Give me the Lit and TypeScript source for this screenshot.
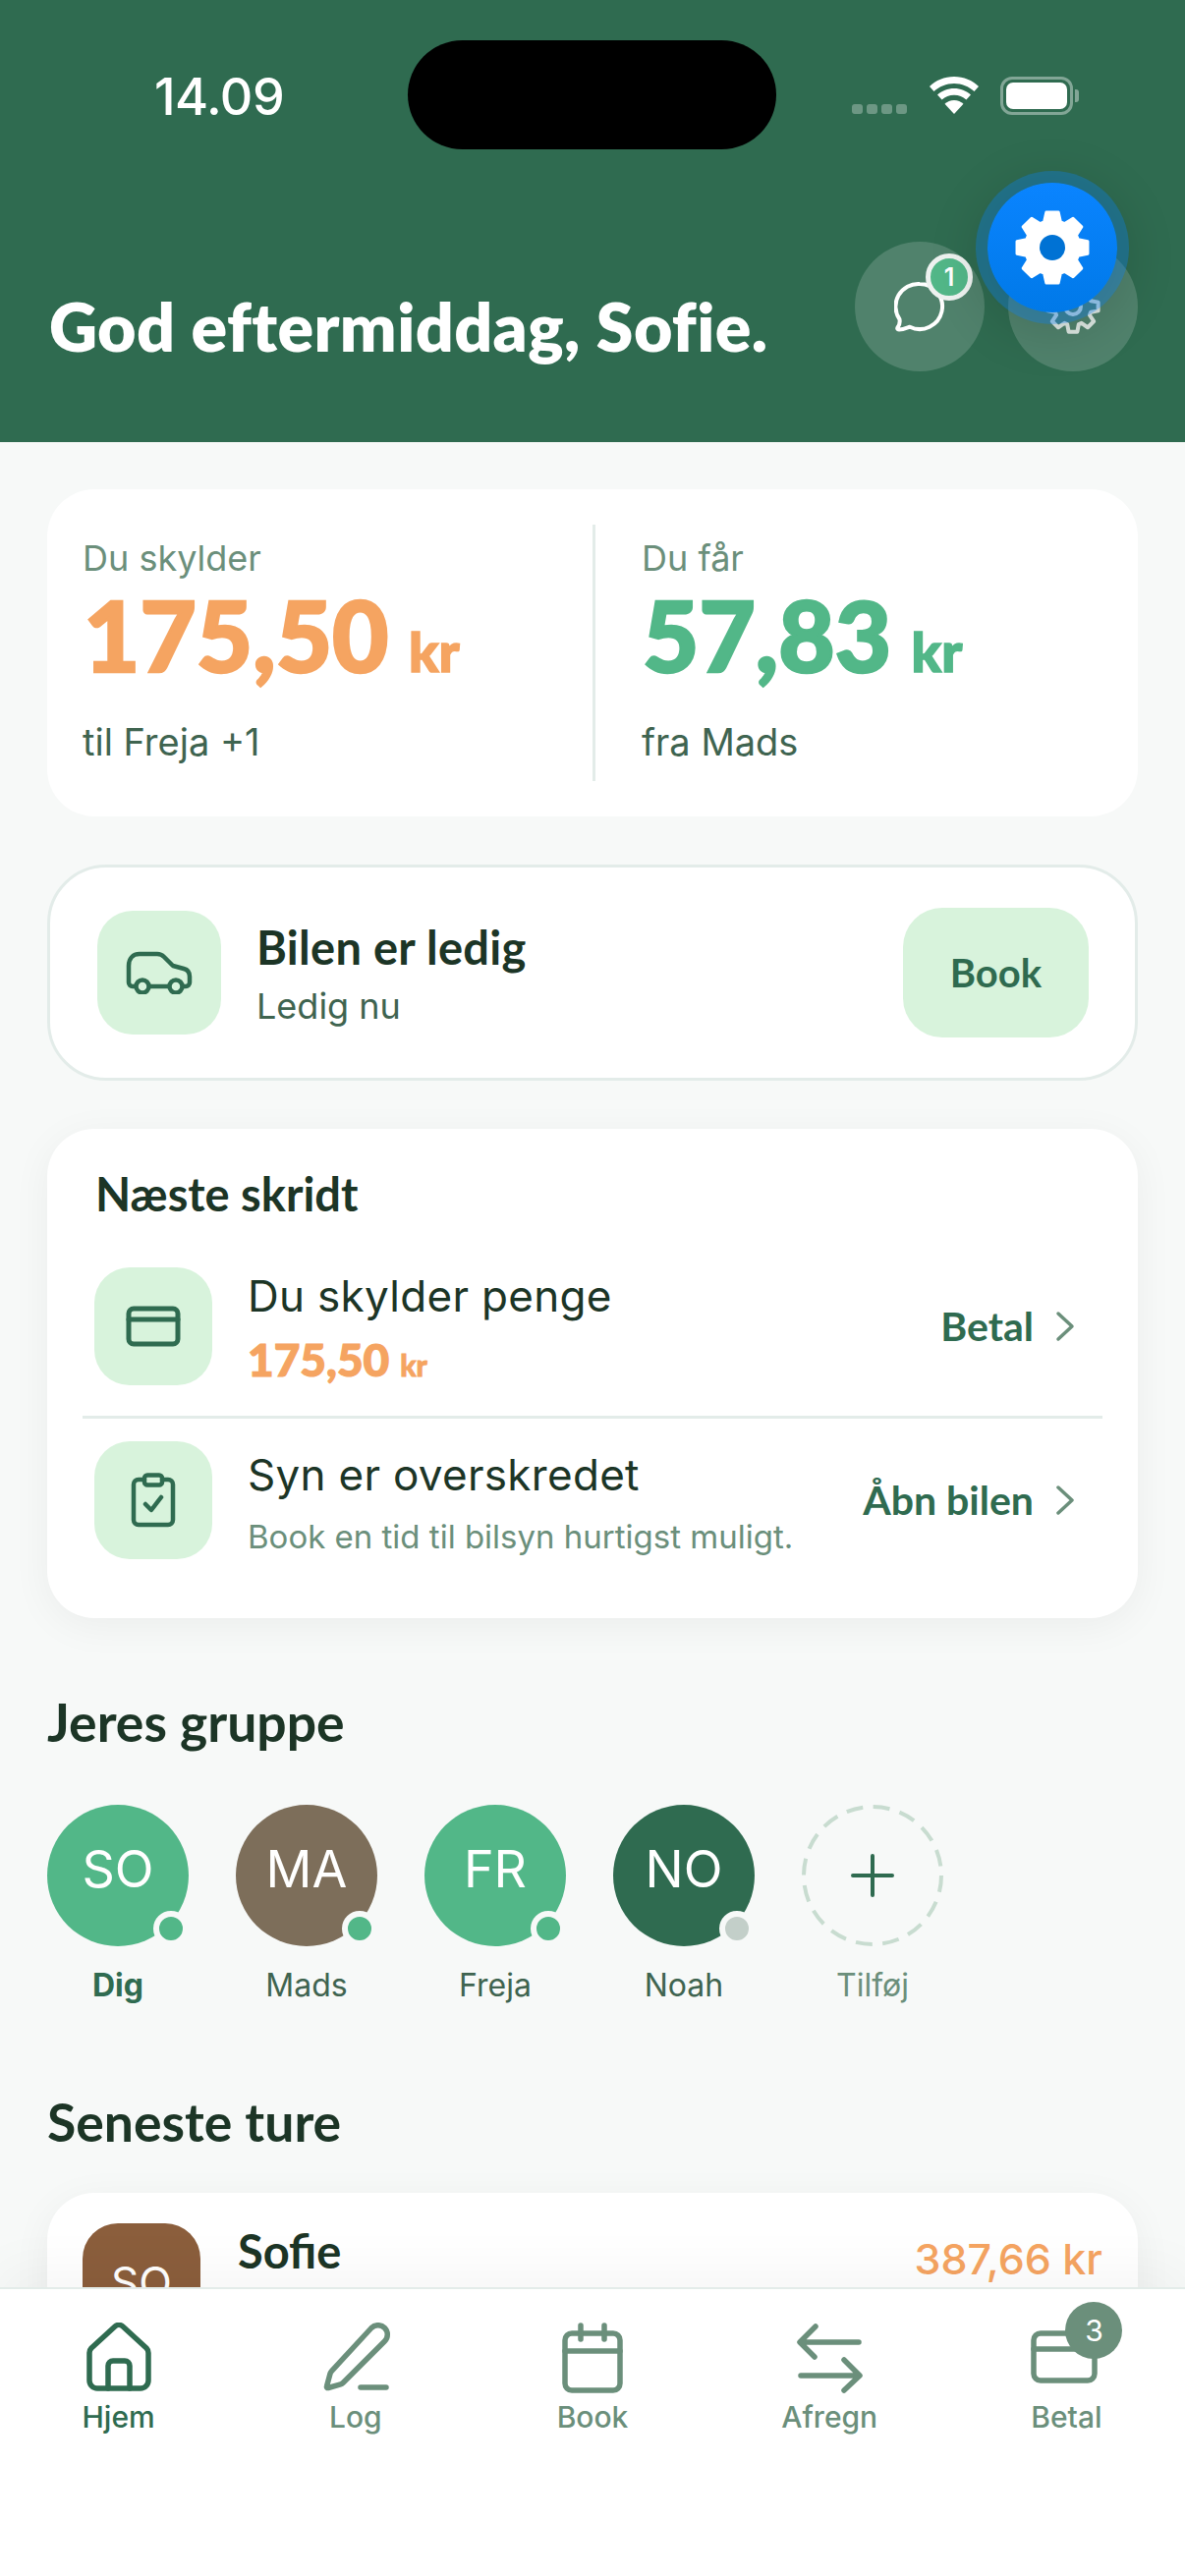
import { LitElement, html, css, svg } from 'lit';
import { customElement } from 'lit/decorators.js';

// 8 tooth gear outline, used for the settings icon and the ghost below it
const gearPath = (cx: number, cy: number, outer: number, root: number) => {
  const pts: string[] = [];
  for (let i = 0; i < 8; i++) {
    const a = (i * Math.PI) / 4 - Math.PI / 2;
    const steps: [number, number][] = [
      [root, -0.31],
      [outer, -0.17],
      [outer, 0.17],
      [root, 0.31],
    ];
    for (const [r, d] of steps) {
      pts.push(`${(cx + r * Math.cos(a + d)).toFixed(2)} ${(cy + r * Math.sin(a + d)).toFixed(2)}`);
    }
  }
  return `M${pts.join('L')}Z`;
};

const members = [
  { initials: 'SO', name: 'Dig', color: '#52b788', online: true, self: true },
  { initials: 'MA', name: 'Mads', color: '#7d6e5a', online: true, self: false },
  { initials: 'FR', name: 'Freja', color: '#52b788', online: true, self: false },
  { initials: 'NO', name: 'Noah', color: '#2f6b50', online: false, self: false },
];

const navIcons = {
  home: svg`<path d="M8 26 32 4a6 6 0 0 1 8 0L64 26a7 7 0 0 1 2 5V59a8 8 0 0 1-8 8H14a8 8 0 0 1-8-8V31a7 7 0 0 1 2-5Z"/><path d="M25 67V44a5 5 0 0 1 5-5H42a5 5 0 0 1 5 5V67"/>`,
  log: svg`<path d="M52 5.500a9.500 9.500 0 0 1 13.500 13.500L23 61.500a5 5 0 0 1-2.300 1.300L8 66.500a1.200 1.200 0 0 1-1.500-1.500L10 52a5 5 0 0 1 1.300-2.300Z"/><path d="M41 66H67"/>`,
  book: svg`<rect x="8" y="11" width="56" height="58" rx="7"/><path d="M8 29H64M24 3V17M48 3V17"/>`,
  swap: svg`<path d="M7 20H66M22 4 6 20 21 35M7 54H66M51 38 67 54 51 69"/>`,
  pay: svg`<rect x="3" y="11" width="62" height="48" rx="7"/><path d="M3 27H65"/>`,
};

const navItems: { label: string; icon: keyof typeof navIcons; active?: boolean; badge?: string }[] = [
  { label: 'Hjem', icon: 'home', active: true },
  { label: 'Log', icon: 'log' },
  { label: 'Book', icon: 'book' },
  { label: 'Afregn', icon: 'swap' },
  { label: 'Betal', icon: 'pay', badge: '3' },
];

@customElement('app-root')
export class AppRoot extends LitElement {
  static styles = css`
    :host {
      display: block;
      position: relative;
      width: 1206px;
      height: 2622px;
      overflow: hidden;
      background: #f7f9f8;
      font-family: Inter, 'Noto Sans', sans-serif;
      color: #1c3526;
    }
    svg {
      display: block;
      fill: none;
      stroke: currentColor;
      stroke-linecap: round;
      stroke-linejoin: round;
    }

    /* header */
    .header {
      height: 450px;
      box-sizing: border-box;
      background: #2f6b50;
      color: #fff;
      display: flex;
      flex-direction: column;
      padding: 0 48px 72px 50px;
    }
    .status {
      height: 246px;
      flex: none;
      margin: 0 -48px 0 -50px;
      padding: 75px 108px 0 157px;
      box-sizing: border-box;
      display: flex;
      justify-content: space-between;
      align-items: flex-start;
    }
    .time {
      font-size: 52px;
      line-height: 48px;
      font-weight: 500;
      letter-spacing: -0.5px;
    }
    .status-icons {
      display: flex;
      align-items: flex-start;
      margin-top: 3px;
    }
    .cell {
      display: flex;
      gap: 4px;
      margin: 28px 22px 0 0;
    }
    .cell i {
      width: 11px;
      height: 10px;
      border-radius: 3px;
      background: rgba(255, 255, 255, 0.3);
    }
    .wifi {
      margin-right: 21px;
      stroke: none;
      fill: #fff;
    }
    .battery {
      position: relative;
      width: 74px;
      height: 39px;
      box-sizing: border-box;
      border: 3px solid rgba(255, 255, 255, 0.4);
      border-radius: 12px;
      padding: 3px;
      margin-right: 6px;
    }
    .battery i {
      display: block;
      height: 100%;
      background: #fff;
      border-radius: 7px;
    }
    .battery::after {
      content: '';
      position: absolute;
      right: -9px;
      top: 10px;
      width: 4px;
      height: 13px;
      border-radius: 0 3px 3px 0;
      background: rgba(255, 255, 255, 0.4);
    }
    .island {
      position: absolute;
      left: 415px;
      top: 41px;
      width: 375px;
      height: 111px;
      border-radius: 56px;
      background: #000;
    }
    .head-row {
      display: flex;
      align-items: flex-start;
      justify-content: space-between;
    }
    h1 {
      margin: 20px 0 0;
      font: 800 68px/132px Lato, 'Noto Sans', sans-serif;
      letter-spacing: 0.4px;
      white-space: nowrap;
    }
    .head-actions {
      display: flex;
      gap: 24px;
    }
    .round {
      position: relative;
      width: 132px;
      height: 132px;
      border-radius: 50%;
      background: rgba(255, 255, 255, 0.16);
      display: flex;
      align-items: center;
      justify-content: center;
    }
    .badge-chat {
      position: absolute;
      left: 72px;
      top: 12px;
      width: 48px;
      height: 48px;
      box-sizing: border-box;
      border: 5px solid #eef2f0;
      border-radius: 50%;
      background: #52b788;
      font-size: 25px;
      font-weight: 600;
      line-height: 38px;
      text-align: center;
    }
    .fab {
      position: absolute;
      left: 1005px;
      top: 186px;
      width: 132px;
      height: 132px;
      border-radius: 50%;
      background: linear-gradient(#0a84ff, #0079e8);
      box-shadow: 0 0 0 12px rgba(10, 132, 255, 0.32), 0 10px 50px 14px rgba(0, 0, 0, 0.12);
      display: flex;
      align-items: center;
      justify-content: center;
    }

    /* main */
    .main {
      padding: 48px 48px 0;
      display: flex;
      flex-direction: column;
    }
    .card {
      background: #fff;
      border-radius: 48px;
    }
    .balance {
      height: 333px;
      box-sizing: border-box;
      padding: 36px;
      display: flex;
    }
    .bal {
      flex: none;
      width: 522px;
      box-sizing: border-box;
      border-right: 3px solid #e3ece9;
    }
    .bal.right {
      width: auto;
      border: 0;
      padding-left: 47px;
    }
    .bal .cap {
      font-size: 36px;
      line-height: 70px;
      color: #6b8f7b;
      margin-top: -1px;
    }
    .amt {
      font: 900 99px/76px Lato, 'Noto Sans', sans-serif;
      margin: 5px 0 0 1px;
      white-space: nowrap;
      -webkit-text-stroke: 2.5px currentColor;
    }
    .amt small {
      font-size: 56px;
      margin-left: -3px;
      -webkit-text-stroke: 1.5px currentColor;
    }
    .orange {
      color: #f5a461;
    }
    .green {
      color: #52b788;
    }
    .bal .sub {
      font-size: 38px;
      line-height: 48px;
      color: #3f6450;
      margin-top: 30px;
    }

    .car {
      margin-top: 49px;
      height: 220px;
      box-sizing: border-box;
      border: 3px solid #e3ece9;
      border-radius: 60px;
      padding: 0 47px 0 48px;
      display: flex;
      align-items: center;
    }
    .tile {
      flex: none;
      display: flex;
      align-items: center;
      justify-content: center;
      background: #d8f3dc;
      color: #2f6b50;
      border-radius: 36px;
    }
    .car .tile {
      width: 126px;
      height: 126px;
      margin-right: 36px;
    }
    .car-text {
      flex: 1;
      padding-top: 4px;
    }
    .car-title {
      font: 700 47px/56px Lato, 'Noto Sans', sans-serif;
      letter-spacing: 0.3px;
    }
    .car-sub {
      font-size: 36px;
      line-height: 50px;
      color: #3f6450;
      margin-top: 7px;
    }
    .book-btn {
      width: 189px;
      height: 132px;
      border-radius: 40px;
      background: #d8f3dc;
      color: #2f6b50;
      font: 700 40px/132px Lato, 'Noto Sans', sans-serif;
      text-align: center;
    }

    .steps {
      margin-top: 49px;
      height: 498px;
      box-sizing: border-box;
      padding: 33px 36px 0;
      box-shadow: 0 8px 40px rgba(0, 0, 0, 0.05);
    }
    .steps h2 {
      margin: 0 0 0 13px;
      font: 700 47px/66px Lato, 'Noto Sans', sans-serif;
    }
    .step {
      display: flex;
      align-items: center;
      height: 120px;
      padding: 0 0 0 12px;
    }
    .step.first {
      margin-top: 42px;
      padding-bottom: 31px;
      border-bottom: 3px solid #e3ece9;
    }
    .step.second {
      margin-top: 23px;
    }
    .step .tile {
      width: 120px;
      height: 120px;
      margin-right: 36px;
    }
    .step-text {
      flex: 1;
    }
    .step-title {
      font-size: 44px;
      line-height: 60px;
      letter-spacing: 0.3px;
      margin-top: 4px;
    }
    .step-amt {
      font: 900 46px/52px Lato, 'Noto Sans', sans-serif;
      margin-top: 9px;
      -webkit-text-stroke: 1.2px currentColor;
    }
    .step-amt small {
      font-size: 30px;
      margin-left: 0;
      -webkit-text-stroke: 0.8px currentColor;
    }
    .step-sub {
      font-size: 33px;
      line-height: 48px;
      color: #6b8f7b;
      margin-top: 9px;
    }
    .step-action {
      flex: none;
      display: flex;
      align-items: center;
      gap: 22px;
      padding-right: 28px;
      font: 700 41px/48px Lato, 'Noto Sans', sans-serif;
      color: #2f6b50;
    }
    .step-action svg {
      color: #6b8f7b;
    }

    .section-title {
      margin: 0;
      font: 700 53.500px/64px Lato, 'Noto Sans', sans-serif;
      color: #1c3526;
    }
    .group-title {
      margin-top: 73px;
    }
    .group {
      display: flex;
      gap: 48px;
      margin-top: 53px;
    }
    .member {
      width: 144px;
      display: flex;
      flex-direction: column;
      align-items: center;
    }
    .avatar {
      position: relative;
      width: 144px;
      height: 144px;
      box-sizing: border-box;
      border-radius: 50%;
      color: #fff;
      font-size: 52px;
      line-height: 132px;
      text-align: center;
    }
    .dot {
      position: absolute;
      right: 0;
      bottom: 0;
      width: 36px;
      height: 36px;
      box-sizing: border-box;
      border: 6px solid #f7f9f8;
      border-radius: 50%;
      background: #52b788;
    }
    .dot.off {
      background: #c3cfc9;
    }
    .add {
      color: #2f6b50;
      display: flex;
      align-items: center;
      justify-content: center;
    }
    .add .ring {
      position: absolute;
      inset: 0;
      color: #c8dcd0;
      stroke-linecap: butt;
    }
    .mname {
      font-size: 32px;
      line-height: 44px;
      margin-top: 18px;
      color: #3f6450;
    }
    .mname.self {
      font-weight: 700;
      color: #2f6b50;
    }
    .mname.muted {
      color: #6b8f7b;
    }
    .trips-title {
      margin-top: 84px;
    }
    .trip {
      margin-top: 41px;
      height: 260px;
      box-sizing: border-box;
      padding: 31px 36px;
      display: flex;
      align-items: flex-start;
      box-shadow: 0 8px 40px rgba(0, 0, 0, 0.05);
    }
    .trip-av {
      flex: none;
      width: 120px;
      height: 120px;
      border-radius: 36px;
      background: #8b5e3c;
      color: #fff;
      font-size: 44px;
      line-height: 120px;
      text-align: center;
      margin-right: 38px;
    }
    .trip-name {
      flex: 1;
      font: 700 47px/56px Lato, 'Noto Sans', sans-serif;
    }
    .trip-amt {
      font-size: 43px;
      font-weight: 500;
      line-height: 56px;
      color: #f5a461;
      margin-top: 8px;
    }

    /* bottom nav, sits over the scrolled content */
    .nav {
      position: absolute;
      left: 0;
      right: 0;
      bottom: 0;
      height: 294px;
      box-sizing: border-box;
      background: #fff;
      border-top: 2px solid #e3ece9;
      box-shadow: 0 -20px 50px rgba(0, 0, 0, 0.035);
      display: flex;
      padding-top: 34px;
    }
    .nav-item {
      flex: 1;
      display: flex;
      flex-direction: column;
      align-items: center;
      color: #6b8f7b;
      font-size: 30px;
      line-height: 40px;
      font-weight: 500;
    }
    .nav-item.active {
      color: #2f6b50;
    }
    .nav-icon {
      position: relative;
      width: 72px;
      height: 72px;
      margin-bottom: 4px;
    }
    .nav-badge {
      position: absolute;
      left: 35px;
      top: -21px;
      width: 58px;
      height: 58px;
      border-radius: 50%;
      background: #6b8f7b;
      color: #fff;
      font-size: 30px;
      font-weight: 400;
      line-height: 58px;
      text-align: center;
    }
  `;

  private renderStatus() {
    return html`<div class="status">
      <div class="time">14.09</div>
      <div class="status-icons">
        <div class="cell"><i></i><i></i><i></i><i></i></div>
        <svg class="wifi" width="52" height="38" viewBox="0 0 52 38">
          <path d="M26 0C16 0 7.500 3.800 1 10l4.500 5C11 10 18 7 26 7s15 3 20.500 8L51 10C44.500 3.800 36 0 26 0Z" />
          <path d="M26 12c-6.500 0-12.500 2.500-17 6.500l4.600 5c3.300-3 7.600-4.700 12.400-4.700s9.100 1.700 12.400 4.700l4.600-5C38.500 14.500 32.500 12 26 12Z" />
          <path d="M26 24c-3.700 0-7 1.400-9.500 3.700L26 38l9.500-10.300C33 25.400 29.700 24 26 24Z" />
        </svg>
        <div class="battery"><i></i></div>
      </div>
    </div>`;
  }

  private renderAmount(value: string, tone: string) {
    return html`<div class="amt ${tone}">${value} <small>kr</small></div>`;
  }

  private renderChevron() {
    return html`<svg width="20" height="32" viewBox="0 0 20 32" stroke-width="3.500">
      <path d="M3 3 17 16 3 29" />
    </svg>`;
  }

  render() {
    return html`
      <div class="header">
        ${this.renderStatus()}
        <div class="head-row">
          <h1>God eftermiddag, Sofie.</h1>
          <div class="head-actions">
            <div class="round">
              <svg width="52" height="52" viewBox="0 0 52 52" stroke-width="4">
                <path d="M26 3a23 23 0 1 1-10 43.700c-3 1-6.500 2.800-11 2.800-1.800 0-2.200-1.300-1.300-2.500 1.700-2.200 2.300-5 1.800-8A23 23 0 0 1 26 3Z" />
              </svg>
              <div class="badge-chat">1</div>
            </div>
            <div class="round">
              <svg width="72" height="72" viewBox="0 0 72 72" stroke-width="4" style="opacity:.8">
                <path d="${gearPath(36, 36, 26, 19)}" />
                <circle cx="36" cy="36" r="8" />
              </svg>
            </div>
          </div>
        </div>
      </div>
      <div class="island"></div>
      <div class="fab">
        <svg width="80" height="80" viewBox="0 0 80 80">
          <path d="${gearPath(40, 40, 36.500, 27.500)}" fill="#fff" stroke="#fff" stroke-width="3" />
          <circle cx="40" cy="40" r="13" fill="#0072d4" stroke="none" />
        </svg>
      </div>

      <div class="main">
        <div class="card balance">
          <div class="bal">
            <div class="cap">Du skylder</div>
            ${this.renderAmount('175,50', 'orange')}
            <div class="sub">til Freja +1</div>
          </div>
          <div class="bal right">
            <div class="cap">Du får</div>
            ${this.renderAmount('57,83', 'green')}
            <div class="sub">fra Mads</div>
          </div>
        </div>

        <div class="card car">
          <div class="tile">
            <svg width="68" height="44" viewBox="0 0 68 44" stroke-width="4.500">
              <path d="M10 36H7a4 4 0 0 1-4-4V15C3 8 7 3 14 3H32c3 0 5 1 7 3l9 9 11 3c4 1 6 4 6 8v6a4 4 0 0 1-4 4h-3M24 36H44" />
              <circle cx="17" cy="36" r="6.500" />
              <circle cx="51" cy="36" r="6.500" />
            </svg>
          </div>
          <div class="car-text">
            <div class="car-title">Bilen er ledig</div>
            <div class="car-sub">Ledig nu</div>
          </div>
          <div class="book-btn">Book</div>
        </div>

        <div class="card steps">
          <h2>Næste skridt</h2>
          <div class="step first">
            <div class="tile">
              <svg width="56" height="42" viewBox="0 0 56 42" stroke-width="5">
                <rect x="3" y="3" width="50" height="36" rx="5" />
                <path d="M3 14H53" />
              </svg>
            </div>
            <div class="step-text">
              <div class="step-title">Du skylder penge</div>
              <div class="step-amt orange">175,50 <small>kr</small></div>
            </div>
            <div class="step-action">Betal ${this.renderChevron()}</div>
          </div>
          <div class="step second">
            <div class="tile">
              <svg width="46" height="56" viewBox="0 0 46 56" stroke-width="4.500">
                <path d="M14 7H8a5 5 0 0 0-5 5V48a5 5 0 0 0 5 5H38a5 5 0 0 0 5-5V12a5 5 0 0 0-5-5H32" />
                <rect x="14" y="2.500" width="18" height="10" rx="3" />
                <path d="M15 32 21 38 31 25" />
              </svg>
            </div>
            <div class="step-text">
              <div class="step-title">Syn er overskredet</div>
              <div class="step-sub">Book en tid til bilsyn hurtigst muligt.</div>
            </div>
            <div class="step-action">Åbn bilen ${this.renderChevron()}</div>
          </div>
        </div>

        <h2 class="section-title group-title">Jeres gruppe</h2>
        <div class="group">
          ${members.map(
            m => html`<div class="member">
              <div class="avatar" style="background:${m.color}">
                ${m.initials}
                <div class="dot ${m.online ? '' : 'off'}"></div>
              </div>
              <div class="mname ${m.self ? 'self' : ''}">${m.name}</div>
            </div>`,
          )}
          <div class="member">
            <div class="avatar add">
              <svg class="ring" width="144" height="144" viewBox="0 0 144 144" stroke-width="4" stroke-dasharray="17 10.500">
                <circle cx="72" cy="72" r="70" />
              </svg>
              <svg width="44" height="44" viewBox="0 0 44 44" stroke-width="4">
                <path d="M22 2V42M2 22H42" />
              </svg>
            </div>
            <div class="mname muted">Tilføj</div>
          </div>
        </div>

        <h2 class="section-title trips-title">Seneste ture</h2>
        <div class="card trip">
          <div class="trip-av">SO</div>
          <div class="trip-name">Sofie</div>
          <div class="trip-amt">387,66 kr</div>
        </div>
      </div>

      <div class="nav">
        ${navItems.map(
          item => html`<div class="nav-item ${item.active ? 'active' : ''}">
            <div class="nav-icon">
              <svg width="72" height="72" viewBox="0 0 72 72" stroke-width="5.500">${navIcons[item.icon]}</svg>
              ${item.badge ? html`<div class="nav-badge">${item.badge}</div>` : null}
            </div>
            ${item.label}
          </div>`,
        )}
      </div>
    `;
  }
}
